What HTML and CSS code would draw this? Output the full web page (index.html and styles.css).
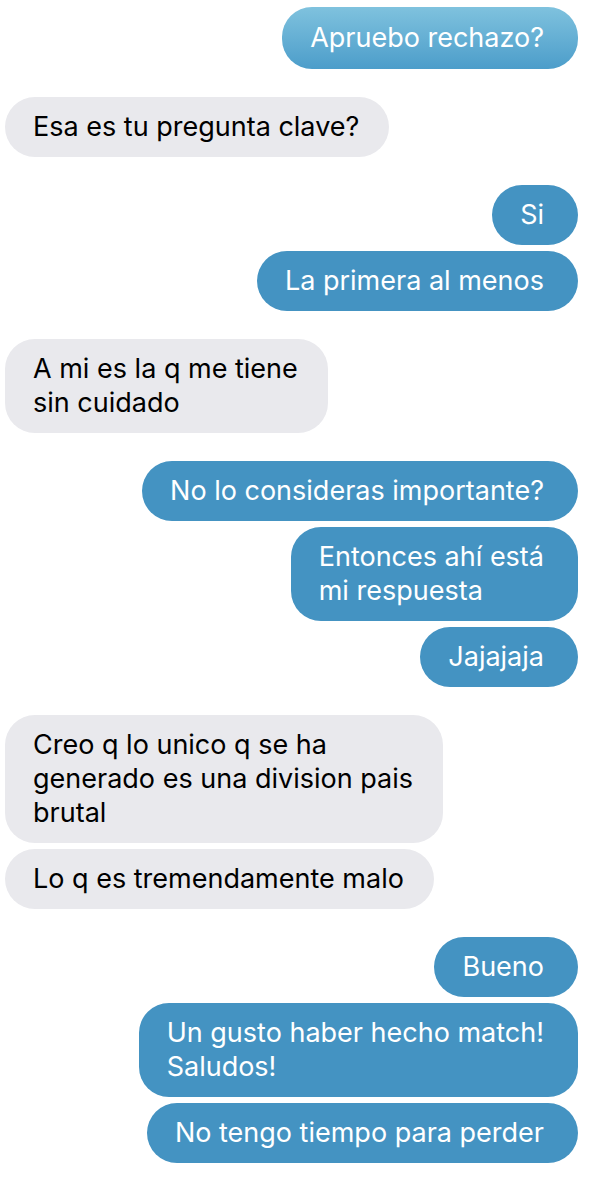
FILE: index.html
```html
<!DOCTYPE html>
<html lang="es">

<head>
    <meta charset="UTF-8">
    <meta name="viewport" content="width=device-width, initial-scale=1.0">
    <title>Chat</title>
    <link rel="stylesheet" href="styles.css">
</head>

<body>
    <div class="chat">
        <div class="group sent">
            <div class="bubble first">Apruebo rechazo?</div>
        </div>
        <div class="group received">
            <div class="bubble">Esa es tu pregunta clave?</div>
        </div>
        <div class="group sent">
            <div class="bubble">Si</div>
            <div class="bubble">La primera al menos</div>
        </div>
        <div class="group received">
            <div class="bubble">A mi es la q me tiene<br>sin cuidado</div>
        </div>
        <div class="group sent">
            <div class="bubble">No lo consideras importante?</div>
            <div class="bubble">Entonces ahí está<br>mi respuesta</div>
            <div class="bubble">Jajajaja</div>
        </div>
        <div class="group received">
            <div class="bubble">Creo q lo unico q se ha<br>generado es una division pais<br>brutal</div>
            <div class="bubble">Lo q es tremendamente malo</div>
        </div>
        <div class="group sent">
            <div class="bubble">Bueno</div>
            <div class="bubble">Un gusto haber hecho match!<br>Saludos!</div>
            <div class="bubble">No tengo tiempo para perder</div>
        </div>
    </div>
</body>

</html>
```

FILE: styles.css
```css
body {
    margin: 0;
    padding: 7px 27px 0 5px;
    background: #ffffff;
    font-family: Inter, "Noto Sans", sans-serif;
}

.chat {
    display: flex;
    flex-direction: column;
    gap: 28px;
}

.group {
    display: flex;
    flex-direction: column;
    gap: 6px;
}

.sent {
    align-items: flex-end;
}

.received {
    align-items: flex-start;
}

.bubble {
    font-size: 27px;
    line-height: 34px;
    padding: 13px 30px 13px 28px;
    border-radius: 30px;
    white-space: nowrap;
}

.sent .bubble {
    background-color: #4493c2;
    color: #ffffff;
    padding-right: 34px;
}

/* first message still has the old gradient look */
.sent .bubble.first {
    background: linear-gradient(to bottom, #7fc2de, #4c9dca);
    padding-top: 14px;
    padding-bottom: 14px;
}

.received .bubble {
    background-color: #e9e9ed;
    color: #000000;
}
```
